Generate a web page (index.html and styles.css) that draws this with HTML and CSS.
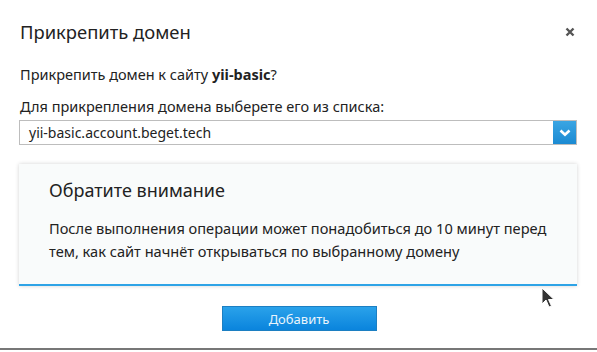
FILE: index.html
```html
<!DOCTYPE html>
<html lang="ru">
<head>
  <meta charset="UTF-8">
  <title>Прикрепить домен</title>
  <link rel="stylesheet" href="styles.css">
</head>
<body>

<div class="modal">
  <div class="modal-head">
    <h2>Прикрепить домен</h2>
    <span class="close">
      <svg width="10" height="10" viewBox="0 0 10 10"><path d="M1.5 1.5 L8.5 8.5 M8.5 1.5 L1.5 8.5" stroke="#555" stroke-width="2.4"/></svg>
    </span>
  </div>

  <p class="question">Прикрепить домен к сайту <b>yii-basic</b>?</p>

  <label for="domain">Для прикрепления домена выберете его из списка:</label>
  <div class="select">
    <span class="select-value">yii-basic.account.beget.tech</span>
    <span class="select-arrow">
      <svg width="12" height="8" viewBox="0 0 12 8"><path d="M1.5 1.5 L6 5.8 L10.5 1.5" fill="none" stroke="#fff" stroke-width="2.6"/></svg>
    </span>
  </div>

  <div class="notice">
    <h3>Обратите внимание</h3>
    <p>После выполнения операции может понадобиться до 10 минут перед тем, как сайт начнёт открываться по выбранному домену</p>
  </div>

  <div class="actions">
    <button class="btn">Добавить</button>
  </div>

  <svg class="cursor" width="14" height="22" viewBox="0 0 14 22">
    <path d="M1 1 L1 17 L5 13 L8 20 L10.5 19 L7.5 12.5 L13 12.5 Z" fill="#333" stroke="#fff" stroke-width="1"/>
  </svg>
</div>

</body>
</html>
```

FILE: styles.css
```css
body {
  margin: 0;
  font-family: "Noto Sans", sans-serif;
  color: #222;
  background: #fff;
}

.modal {
  position: relative;
  width: 597px;
  height: 350px;
  padding: 0 20px 0 19px;
  box-sizing: border-box;
  border-bottom: 2px solid #777;
}

.modal-head {
  display: flex;
  justify-content: space-between;
  align-items: center;
  padding-top: 18px;
  height: 26px;
}

.modal-head h2 {
  margin: 0 0 0 1px;
  font-size: 18.4px;
  font-weight: 400;
}

.close {
  display: flex;
  margin-right: 2px;
  margin-top: 2px;
}

.question {
  margin: 20px 0 0 1px;
  font-size: 14.5px;
  line-height: 20px;
}

.question b {
  font-weight: 700;
}

label {
  display: block;
  margin: 12px 0 0 1px;
  font-size: 14.5px;
  line-height: 20px;
}

.select {
  display: flex;
  height: 25px;
  margin-top: 4px;
  border: 1px solid #bdbdbd;
  box-sizing: border-box;
}

.select-value {
  flex: 1;
  padding-left: 9px;
  font-size: 14px;
  line-height: 23px;
}

.select-arrow {
  width: 23px;
  background: linear-gradient(#3aa5e3, #1b8ad2);
  display: flex;
  align-items: center;
  justify-content: center;
}

.notice {
  margin-top: 19px;
  background: #f9fbfb;
  border-bottom: 2px solid #2ea3e6;
  box-shadow: 0 0 4px rgba(0,0,0,0.18);
  padding: 13px 20px 21px 30px;
}

.notice h3 {
  margin: 0;
  font-size: 18px;
  font-weight: 400;
  line-height: 26px;
}

.notice p {
  margin: 14px 0 0;
  font-size: 14.6px;
  line-height: 23px;
}

.actions {
  display: flex;
  justify-content: center;
  margin-top: 20px;
}

.btn {
  width: 155px;
  height: 25px;
  border: 1px solid #1c7fc2;
  background: linear-gradient(#2aa2ea, #0a84dd);
  color: #e9f4fc;
  font-family: "Noto Sans", sans-serif;
  font-size: 13px;
  padding: 0;
  margin-left: 2px;
}

.cursor {
  position: absolute;
  left: 541px;
  top: 287px;
}
```
